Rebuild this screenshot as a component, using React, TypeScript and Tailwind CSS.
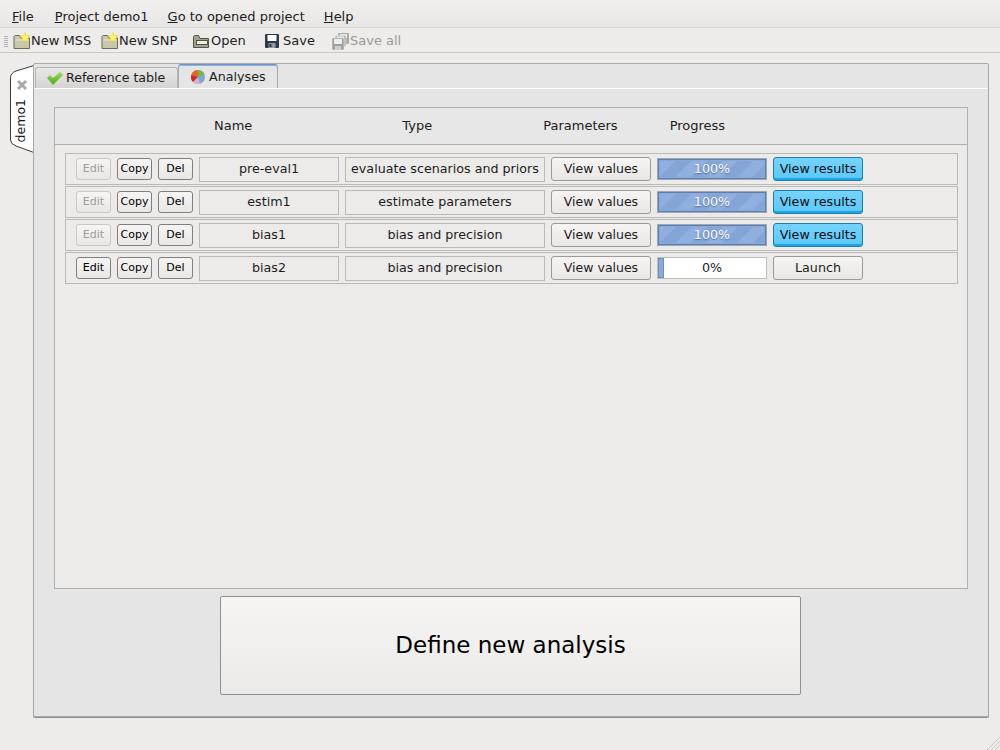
const FONT = "font-['DejaVu_Sans',sans-serif]";

type Row = { name: string; type: string; done: boolean };

const rows: Row[] = [
  { name: "pre-eval1", type: "evaluate scenarios and priors", done: true },
  { name: "estim1", type: "estimate parameters", done: true },
  { name: "bias1", type: "bias and precision", done: true },
  { name: "bias2", type: "bias and precision", done: false },
];

function FolderIcon({ star }: { star?: boolean }) {
  return (
    <svg width="18" height="18" viewBox="0 0 18 18" className="shrink-0">
      <path d="M1 4.5 L1 16.5 L16.5 16.5 L16.5 6 L8 6 L6.5 3.5 L2 3.5 Z" fill="#c9c8ac" stroke="#6d6c58" />
      <path d="M2 8 H16" stroke="#e9e8d6" />
      {star ? (
        <path d="M12 0.5 L13.5 3.5 L17 4 L14.5 6.3 L15 9.5 L12 8 L9 9.5 L9.5 6.3 L7 4 L10.5 3.5 Z" fill="#fdf06a" stroke="#e7d53c" strokeWidth="0.6" />
      ) : null}
    </svg>
  );
}

function OpenIcon() {
  return (
    <svg width="16" height="16" viewBox="0 0 16 16" className="shrink-0">
      <path d="M0.5 3.5 L0.5 14.5 L15.5 14.5 L15.5 5.5 L7 5.5 L5.5 2.5 L1.5 2.5 Z" fill="#a3a28a" stroke="#55544a" />
      <rect x="3.5" y="7.5" width="11" height="4" fill="#eeeee6" stroke="#55544a" />
    </svg>
  );
}

function SaveIcon() {
  return (
    <svg width="14" height="14" viewBox="0 0 14 14" className="shrink-0">
      <rect x="0" y="0" width="14" height="14" rx="1" fill="#2c3a48" />
      <rect x="2.5" y="1" width="9" height="6" fill="#ffffff" />
      <rect x="3.5" y="9" width="7" height="5" fill="#8f99a3" />
      <rect x="4.5" y="10" width="2" height="3" fill="#2c3a48" />
    </svg>
  );
}

function SaveAllIcon() {
  return (
    <svg width="17" height="17" viewBox="0 0 17 17" className="shrink-0">
      <rect x="6" y="0" width="11" height="11" rx="1" fill="#a9a9a9" />
      <rect x="8" y="1" width="7" height="4" fill="#e8e8e8" />
      <rect x="3" y="2.5" width="11" height="11" rx="1" fill="#b4b4b4" stroke="#ececec" strokeWidth="0.5" />
      <rect x="5" y="3.5" width="7" height="4" fill="#ececec" />
      <rect x="0" y="5" width="12" height="12" rx="1" fill="#9f9f9f" stroke="#ececec" strokeWidth="0.5" />
      <rect x="2" y="6" width="8" height="5" fill="#ececec" />
      <rect x="3" y="13" width="6" height="4" fill="#d0d0d0" />
    </svg>
  );
}

function CheckIcon() {
  return (
    <svg width="16" height="13" viewBox="0 0 16 13" className="shrink-0">
      <defs>
        <linearGradient id="chk" x1="0" y1="0" x2="0" y2="1">
          <stop offset="0" stopColor="#a6e05a" />
          <stop offset="1" stopColor="#4aa516" />
        </linearGradient>
      </defs>
      <path d="M0.3 6 L3 3.5 L6 6.2 L13 0.3 L15.7 3 L6 12.7 Z" fill="url(#chk)" stroke="#7cc23c" strokeWidth="0.5" />
    </svg>
  );
}

function PieIcon() {
  return (
    <svg width="14" height="14" viewBox="0 0 14 14" className="shrink-0">
      <circle cx="7" cy="7" r="7" fill="#7fa3d4" />
      <path d="M7 7 L7 0 A7 7 0 0 0 0.3 5 Z" fill="#e8662a" />
      <path d="M7 7 L7 0 A7 7 0 0 1 13.5 4.5 Z" fill="#74b84a" />
      <path d="M7 7 L0.3 5 A7 7 0 0 0 2 12 Z" fill="#c9272c" />
      <path d="M7 7 L2 12 A7 7 0 0 0 9 13.7 Z" fill="#d8b4c8" />
    </svg>
  );
}

function ToolItem({ icon, label, disabled, className, labelClass = "" }: { icon: React.ReactNode; label: string; disabled?: boolean; className: string; labelClass?: string }) {
  return (
    <div className={`flex items-center ${className}`}>
      {icon}
      <span className={`${labelClass} ${disabled ? "text-[#9a9a9a]" : "text-[#1e1e1e]"}`}>{label}</span>
    </div>
  );
}

function SmallButton({ label, disabled }: { label: string; disabled?: boolean }) {
  return (
    <div
      className={`flex h-[22px] w-[35px] items-center justify-center rounded-[3px] border bg-gradient-to-b from-[#f6f5f4] to-[#e8e7e6] text-[11px] ${
        disabled ? "border-[#c9c8c7] text-[#9c9c9c]" : "border-[#7f7f7f] text-black"
      }`}
    >
      {label}
    </div>
  );
}

function Cell({ label, className }: { label: string; className: string }) {
  return (
    <div className={`flex h-[25px] items-center justify-center border border-[#b9b9b7] text-[12.7px] text-[#1c1c1c] ${className}`}>
      {label}
    </div>
  );
}

function Progress({ done }: { done: boolean }) {
  if (done) {
    return (
      <div className="relative flex h-[22px] w-[110px] items-center justify-center border border-[#9aa8ba] bg-[#88a9dc] shadow-[inset_0_0_0_1px_#5f7fa8]">
        <div className="absolute inset-[2px] bg-[repeating-linear-gradient(135deg,#90aede_0px,#90aede_11px,#84a5d8_11px,#84a5d8_22px)]" />
        <span className="relative text-[12.7px] text-white [text-shadow:0_1px_1px_#4f6f9f]">100%</span>
      </div>
    );
  }
  return (
    <div className="relative flex h-[22px] w-[110px] items-center justify-center border border-[#bdbdbd] bg-white">
      <div className="absolute bottom-0 left-0 top-0 w-[6px] border border-[#6f8db8] bg-[#8aaadb]" />
      <span className="relative text-[12.7px] text-[#1c1c1c]">0%</span>
    </div>
  );
}

function AnalysisRow({ row, index }: { row: Row; index: number }) {
  return (
    <div className="flex h-[32px] items-center border border-[#b9b9b7] pl-[10px]">
      <SmallButton label="Edit" disabled={index < 3} />
      <div className="ml-[6px]">
        <SmallButton label="Copy" />
      </div>
      <div className="ml-[6px]">
        <SmallButton label="Del" />
      </div>
      <Cell label={row.name} className="ml-[6px] w-[140px]" />
      <Cell label={row.type} className="ml-[6px] w-[200px]" />
      <div className="ml-[6px] flex h-[24px] w-[100px] items-center justify-center rounded-[3px] border border-[#9a9a9a] bg-gradient-to-b from-[#f6f5f4] to-[#e8e7e6] text-[12.5px] text-[#1c1c1c]">
        View values
      </div>
      <div className="ml-[6px]">
        <Progress done={row.done} />
      </div>
      {row.done ? (
        <div className="ml-[6px] flex h-[24px] w-[90px] items-center justify-center rounded-[3px] border border-[#1f7fa8] bg-gradient-to-b from-[#74d3fc] to-[#5ac8fa] text-[12.7px] text-[#0c0c0c] shadow-[inset_0_-2px_0_#1ea5e6]">
          View results
        </div>
      ) : (
        <div className="ml-[6px] flex h-[24px] w-[90px] items-center justify-center rounded-[3px] border border-[#9a9a9a] bg-gradient-to-b from-[#f6f5f4] to-[#e8e7e6] text-[12.7px] text-[#1c1c1c]">
          Launch
        </div>
      )}
    </div>
  );
}

export default function App() {
  return (
    <div className={`${FONT} relative flex h-[750px] w-[1000px] flex-col overflow-hidden bg-[#edeceb] text-[13px] text-[#1c1c1c]`}>
      <div className="flex h-[28px] shrink-0 items-center border-b border-[#d9d8d7] bg-gradient-to-b from-[#f0efee] to-[#e8e7e6] pl-[12px] pt-[6px]">
        <span><span className="underline">F</span>ile</span>
        <span className="ml-[21px]"><span className="underline">P</span>roject demo1</span>
        <span className="ml-[19px]"><span className="underline">G</span>o to opened project</span>
        <span className="ml-[19px]"><span className="underline">H</span>elp</span>
      </div>

      <div className="flex h-[25px] shrink-0 items-center border-b border-[#c9c8c7] bg-[#edeceb] pt-[2px]">
        <div className="ml-[4px] h-[11px] w-[4px] shrink-0 bg-[repeating-linear-gradient(180deg,#b5b5b5_0px,#b5b5b5_1px,transparent_1px,transparent_2px)]" />
        <ToolItem icon={<FolderIcon star />} label="New MSS" className="ml-[5px] w-[88px]" />
        <ToolItem icon={<FolderIcon star />} label="New SNP" className="w-[92px]" />
        <ToolItem icon={<OpenIcon />} label="Open" className="w-[72px]" labelClass="ml-[2px]" />
        <ToolItem icon={<SaveIcon />} label="Save" className="w-[67px]" labelClass="ml-[4px]" />
        <ToolItem icon={<SaveAllIcon />} label="Save all" disabled className="" labelClass="ml-px" />
      </div>

      <div className="flex flex-1 pl-[10px] pt-[10px]">
        <div className="relative mt-[3px] flex h-[87px] w-[23px] shrink-0 flex-col items-center">
          <svg width="24" height="88" viewBox="0 0 24 88" className="absolute -top-[1px] left-0">
            <path d="M24 0.5 L6 6 Q0.5 8 0.5 13 L0.5 75 Q0.5 79 6 81 L24 87.5 Z" fill="#ffffff" stroke="#3a3a3a" />
          </svg>
          <svg width="12" height="12" viewBox="0 0 12 12" className="relative mt-[13px]">
            <path d="M2 2 L10 10 M10 2 L2 10" stroke="#a9a9a9" strokeWidth="3" />
          </svg>
          <span className="relative mt-[8px] text-[12.5px] text-[#111] [writing-mode:vertical-rl] rotate-180">demo1</span>
        </div>

        <div className="relative flex h-[654px] w-[956px] flex-col rounded-[2px] border border-[#a9a9a7] bg-[#e6e5e5] shadow-[0_1px_0_#8f8f8f]">
          <div className="flex h-[24px] shrink-0 items-end pl-[1px]">
            <div className="flex h-[21px] w-[143px] items-center rounded-t-[3px] border border-b-0 border-[#b5b5b3] bg-gradient-to-b from-[#e9e8e7] to-[#d5d4d3] pl-[11px]">
              <CheckIcon />
              <span className="ml-[3px] text-[12.6px]">Reference table</span>
            </div>
            <div className="relative z-10 flex h-[24px] w-[100px] items-center rounded-t-[3px] border border-b-0 border-[#a9a9a7] border-t-[#6f93c9] bg-[#e6e5e5] pl-[12px] shadow-[inset_0_1px_0_#8fb0dd]">
              <PieIcon />
              <span className="ml-[4px] text-[12.7px]">Analyses</span>
            </div>
          </div>

          <div className="flex flex-1 flex-col border-t border-white px-[20px] pt-[18px]">
            <div className="flex h-[38px] shrink-0 items-center border border-[#b0b0ae] bg-[#e8e7e7] text-[13px]">
              <span className="ml-[159px]">Name</span>
              <span className="ml-[150px]">Type</span>
              <span className="ml-[111px]">Parameters</span>
              <span className="ml-[52px]">Progress</span>
            </div>
            <div className="flex h-[444px] shrink-0 flex-col gap-px border border-t-0 border-[#b0b0ae] bg-[#ecebea] pl-[10px] pr-[9px] pt-[8px]">
              {rows.map((row, i) => (
                <AnalysisRow key={row.name} row={row} index={i} />
              ))}
            </div>
            <div className="ml-[166px] mt-[7px] flex h-[99px] w-[581px] items-center justify-center rounded-[2px] border border-[#8f8f8f] bg-gradient-to-b from-[#f6f5f4] to-[#ebeae9] text-[23px] text-black">
              Define new analysis
            </div>
          </div>
        </div>
      </div>

      <svg width="14" height="14" viewBox="0 0 14 14" className="absolute bottom-0 right-0">
        <path d="M14 1 L1 14 M14 5 L5 14 M14 9 L9 14" stroke="#c9c8c7" />
      </svg>
    </div>
  );
}
